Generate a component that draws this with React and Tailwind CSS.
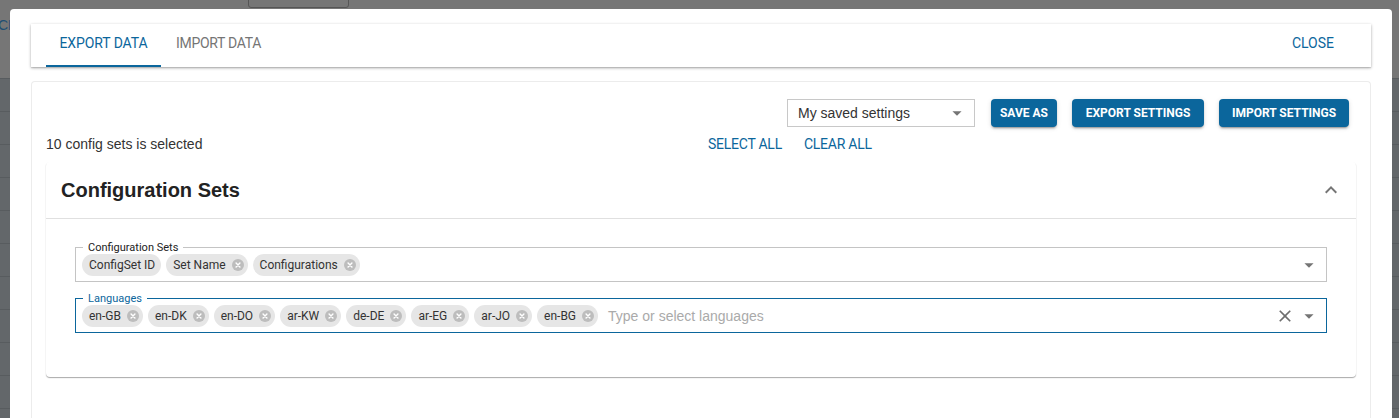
import React from 'react';

function CancelIcon() {
  return (
    <svg width="12" height="12" viewBox="2 2 20 20" className="shrink-0 ml-[6px]">
      <circle cx="12" cy="12" r="10" fill="#bdbdbd" />
      <path d="M8.8 8.8l6.4 6.4M15.2 8.8l-6.4 6.4" stroke="#ffffff" strokeWidth="2.4" strokeLinecap="round" />
    </svg>
  );
}

function Chip({ label, del = true }) {
  return (
    <span
      className={
        del
          ? "flex items-center h-[22px] rounded-full bg-[#e6e6e6] pl-[7px] pr-[4px] text-[12px] text-[#333] font-['Roboto',Arial,sans-serif] shrink-0"
          : "flex items-center h-[22px] rounded-full bg-[#e6e6e6] pl-[7px] pr-[6px] text-[12px] text-[#333] font-['Roboto',Arial,sans-serif] shrink-0"
      }
    >
      {label}
      {del && <CancelIcon />}
    </span>
  );
}

function DropArrow({ size = 22 }) {
  return (
    <svg width={size} height={size} viewBox="0 0 24 24" className="shrink-0">
      <path d="M7 10l5 5 5-5z" fill="#757575" />
    </svg>
  );
}

function CloseIcon() {
  return (
    <svg width="20" height="20" viewBox="0 0 24 24" className="shrink-0">
      <path
        d="M19 6.41L17.59 5 12 10.59 6.41 5 5 6.41 10.59 12 5 17.59 6.41 19 12 13.41 17.59 19 19 17.59 13.41 12z"
        fill="#6e6e6e"
      />
    </svg>
  );
}

export default function App() {
  const rows = Array.from({ length: 11 });
  const langs = ['en-GB', 'en-DK', 'en-DO', 'ar-KW', 'de-DE', 'ar-EG', 'ar-JO', 'en-BG'];
  return (
    <div className="relative w-[1399px] h-[418px] overflow-hidden bg-[#63676a] font-['Liberation_Sans',Arial,sans-serif]">
      {/* dimmed page behind the dialog */}
      <div className="flex flex-col">
        <div className="h-[78px] bg-[#767676] flex items-start">
          <span className="-ml-[2px] mt-[17px] text-[14px] leading-[16px] text-[#1f4f73]">CR</span>
          <div className="ml-[230px] -mt-[10px] w-[101px] h-[18px] border border-[#555555] rounded-[3px]" />
        </div>
        {rows.map((_, i) => (
          <div key={i} className="h-[33px] border-t border-[#585c5f] shrink-0" />
        ))}
      </div>

      {/* dialog */}
      <div className="absolute left-[10px] top-[9px] w-[1382px] h-[409px] bg-white rounded-t-[4px] pt-[15px] px-[21px] flex flex-col">
        {/* tab bar */}
        <div className="h-[43px] shrink-0 flex items-stretch bg-white pl-[15px] pr-[37px] shadow-[0_1px_3px_rgba(0,0,0,0.3),0_1px_1px_rgba(0,0,0,0.1)] font-['Roboto',Arial,sans-serif] text-[14px]">
          <div className="w-[115px] flex items-center justify-center border-b-2 border-[#0b669c] pb-[3px] text-[#0b669c] tracking-[-0.1px]">
            EXPORT DATA
          </div>
          <div className="px-[15px] flex items-center justify-center border-b-2 border-transparent pb-[3px] text-[#757575] tracking-[-0.3px]">
            IMPORT DATA
          </div>
          <div className="ml-auto flex items-center border-b-2 border-transparent pb-[3px] text-[#0b669c]">CLOSE</div>
        </div>

        {/* content card */}
        <div className="mt-[14px] flex-1 border border-b-0 border-[#ececec] rounded-t-[4px] px-[14px] pt-[17px]">
          {/* settings row */}
          <div className="flex justify-end items-center gap-[15px] pr-[7px]">
            <div className="mr-[1px] w-[188px] h-[28px] border border-[#c8c8c8] flex items-center justify-between pl-[10px] pr-[6px] text-[14px] text-[#333]">
              <span>My saved settings</span>
              <DropArrow />
            </div>
            <button className="w-[66px] h-[28px] rounded-[4px] bg-[#0b669c] text-white text-[12px] font-bold font-['Roboto',Arial,sans-serif] shadow-[0_3px_1px_-2px_rgba(0,0,0,0.2),0_2px_2px_0_rgba(0,0,0,0.14),0_1px_5px_0_rgba(0,0,0,0.12)]">
              SAVE AS
            </button>
            <button className="w-[132px] h-[28px] rounded-[4px] bg-[#0b669c] text-white text-[12px] font-bold font-['Roboto',Arial,sans-serif] shadow-[0_3px_1px_-2px_rgba(0,0,0,0.2),0_2px_2px_0_rgba(0,0,0,0.14),0_1px_5px_0_rgba(0,0,0,0.12)]">
              EXPORT SETTINGS
            </button>
            <button className="w-[130px] h-[28px] rounded-[4px] bg-[#0b669c] text-white text-[12px] font-bold font-['Roboto',Arial,sans-serif] shadow-[0_3px_1px_-2px_rgba(0,0,0,0.2),0_2px_2px_0_rgba(0,0,0,0.14),0_1px_5px_0_rgba(0,0,0,0.12)]">
              IMPORT SETTINGS
            </button>
          </div>

          {/* selection row */}
          <div className="grid grid-cols-2 items-center mt-[7px] h-[20px]">
            <div className="text-[14px] text-[#333]">10 config sets is selected</div>
            <div className="flex items-center gap-[8px] font-['Roboto',Arial,sans-serif] text-[14px] text-[#0b669c] tracking-[-0.25px]">
              <span className="px-[7px]">SELECT ALL</span>
              <span className="px-[7px]">CLEAR ALL</span>
            </div>
          </div>

          {/* accordion */}
          <div className="mt-[8px] rounded-[4px] bg-white shadow-[0_1px_1px_0_rgba(0,0,0,0.3),0_1px_2px_0_rgba(0,0,0,0.06)]">
            <div className="h-[57px] border-b border-[#e0e0e0] flex items-center justify-between pl-[15px] pr-[13px]">
              <span className="text-[20px] font-bold text-[#222]">Configuration Sets</span>
              <svg width="24" height="24" viewBox="0 0 24 24">
                <path d="M12 8l-6 6 1.41 1.41L12 10.83l4.59 4.58L18 14z" fill="#757575" />
              </svg>
            </div>
            <div className="px-[29px] pt-[22px] pb-[44px]">
              <fieldset className="border border-[#c4c4c4] px-[6px] pb-[5px]">
                <legend className="px-[5px] ml-[1px] text-[11px] leading-[13px] text-[#222] font-['Roboto',Arial,sans-serif]">
                  Configuration Sets
                </legend>
                <div className="flex items-center h-[22px] gap-[5px]">
                  <Chip label="ConfigSet ID" del={false} />
                  <Chip label="Set Name" />
                  <Chip label="Configurations" />
                  <div className="ml-auto flex items-center">
                    <DropArrow />
                  </div>
                </div>
              </fieldset>
              <fieldset className="mt-[10px] border border-[#0b669c] px-[6px] pb-[5px]">
                <legend className="px-[5px] ml-[1px] text-[11px] leading-[13px] text-[#0b669c] font-['Roboto',Arial,sans-serif]">
                  Languages
                </legend>
                <div className="flex items-center h-[22px] gap-[5px]">
                  {langs.map((l) => (
                    <Chip key={l} label={l} />
                  ))}
                  <span className="ml-[5px] text-[14px] text-[#aaaaaa]">Type or select languages</span>
                  <div className="ml-auto flex items-center gap-[3px]">
                    <CloseIcon />
                    <DropArrow />
                  </div>
                </div>
              </fieldset>
            </div>
          </div>
        </div>
      </div>
    </div>
  );
}
